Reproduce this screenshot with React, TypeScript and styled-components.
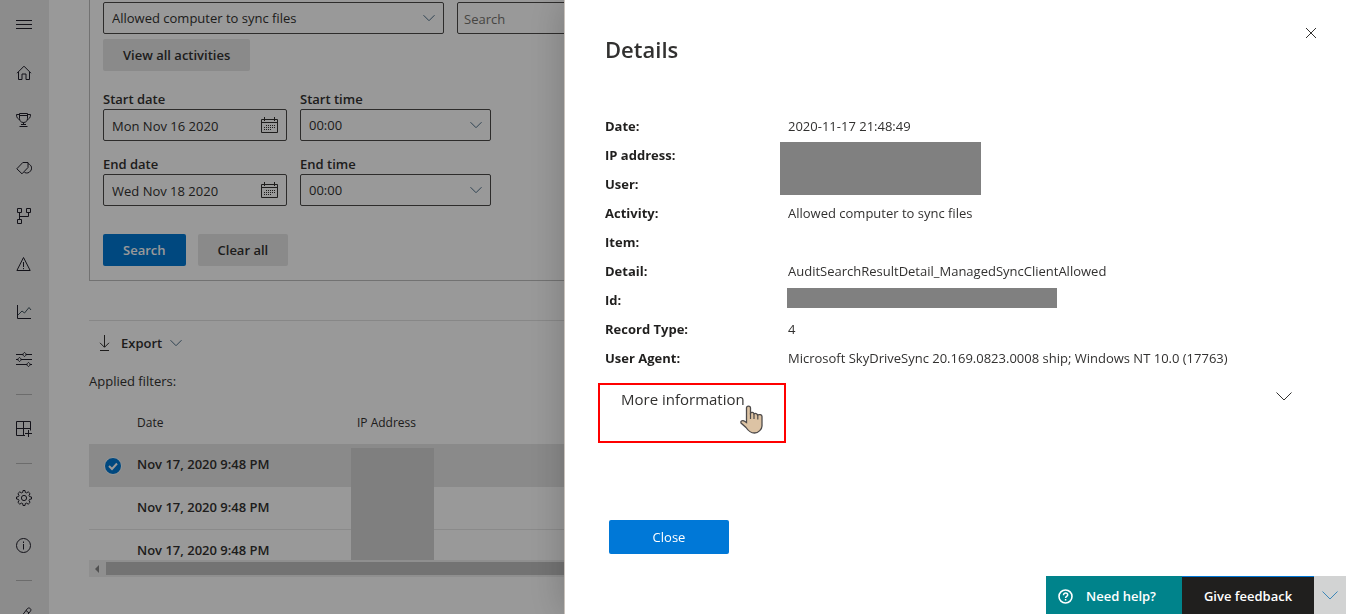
import React from 'react';
import styled, { createGlobalStyle } from 'styled-components';

const GlobalStyle = createGlobalStyle`
  * { box-sizing: border-box; }
  body {
    margin: 0;
    background: #fff;
    color: #323130;
    font-family: "Open Sans", "Noto Sans", sans-serif;
    font-size: 13px;
    line-height: 20px;
    overflow: hidden;
  }
  button, input, select { font: inherit; color: inherit; margin: 0; }
`;

const Icon = styled.svg`
  display: block;
  flex: none;
  fill: none;
  stroke: currentColor;
  stroke-width: 1;
`;

/* ---------- page ---------- */

const Shell = styled.div`
  display: flex;
  height: 100vh;
  overflow: hidden;
`;

const Sidebar = styled.nav`
  flex: none;
  width: 49px;
  background: #e9e9e9;
  color: #201f2a;
`;

const NavButton = styled.button`
  display: flex;
  align-items: center;
  width: 100%;
  height: 48px;
  padding: 0 0 0 16px;
  border: 0;
  background: none;
`;

const NavDivider = styled.hr`
  width: 16px;
  height: 1px;
  margin: 10px 0 10px 16px;
  border: 0;
  background: #b4b4b4;
`;

const Main = styled.main`
  flex: 1;
  min-width: 0;
  padding-left: 40px;
`;

const SearchForm = styled.form`
  display: flex;
  flex-direction: column;
  align-items: flex-start;
  padding: 2px 13px 14px;
  border: 1px solid #bebebe;
  border-top: 0;
`;

const FieldRow = styled.div<{ $top?: number }>`
  display: flex;
  gap: 13px;
  margin-top: ${(p) => p.$top ?? 0}px;
`;

const ButtonRow = styled(FieldRow)`
  gap: 12px;
`;

const Field = styled.div<{ $width: number }>`
  display: flex;
  flex-direction: column;
  width: ${(p) => p.$width}px;
`;

const FieldLabel = styled.label`
  height: 19px;
  line-height: 18px;
  font-weight: 600;
`;

const Control = styled.div`
  display: flex;
  align-items: center;
  height: 32px;
  padding-right: 8px;
  border: 1px solid #4c4a48;
  border-radius: 2px;
  background: #fff;
`;

const TextInput = styled.input<{ $inset?: number }>`
  flex: 1;
  min-width: 0;
  height: 30px;
  padding: 2px 0 0 ${(p) => p.$inset ?? 8}px;
  border: 0;
  outline: 0;
  background: none;
  &::placeholder { color: #76746f; opacity: 1; }
`;

const Select = styled.select`
  flex: 1;
  min-width: 0;
  height: 30px;
  padding: 0 0 0 8px;
  border: 0;
  outline: 0;
  appearance: none;
  background: none;
`;

const IconButton = styled.button`
  display: flex;
  padding: 0;
  border: 0;
  background: none;
`;

const Button = styled.button<{ $primary?: boolean }>`
  height: 32px;
  padding: 0 20px;
  border: 0;
  border-radius: 2px;
  font-weight: 600;
  background: ${(p) => (p.$primary ? '#0078d4' : '#e6e6e6')};
  color: ${(p) => (p.$primary ? '#fff' : '#323130')};
`;

const Results = styled.section`
  margin-top: 39px;
  border-top: 1px solid #e2e2e2;
`;

const ExportButton = styled.button`
  display: flex;
  align-items: center;
  gap: 8px;
  height: 44px;
  padding: 0 8px;
  border: 0;
  background: none;
  font-weight: 600;
`;

const Filters = styled.p`
  margin: 6px 0 0;
`;

const TableFrame = styled.div`
  position: relative;
  height: 158px;
  margin-top: 11px;
  overflow: hidden;
`;

const Table = styled.table`
  width: 100%;
  border-collapse: collapse;
  table-layout: fixed;
`;

const HeadCell = styled.th<{ $width?: number }>`
  width: ${(p) => (p.$width ? `${p.$width}px` : 'auto')};
  height: 42px;
  padding: 0;
  text-align: left;
  font-size: 12px;
  font-weight: 500;
`;

const Row = styled.tr<{ $selected?: boolean }>`
  height: 43px;
  background: ${(p) => (p.$selected ? '#e6e6e6' : '#fff')};
  box-shadow: inset 0 -1px #e6e6e6;
`;

const Cell = styled.td`
  padding: 0 0 4px;
  font-weight: 600;
`;

const CheckWrap = styled.label`
  position: relative;
  display: block;
  width: 18px;
  height: 18px;
  margin: 5px 0 0 15px;
`;

const CheckBox = styled.input`
  appearance: none;
  display: block;
  width: 18px;
  height: 18px;
  border: 1px solid #fff;
  border-radius: 50%;
  background: #0078d4;
`;

const CheckMark = styled(Icon)`
  position: absolute;
  inset: 0;
  color: #fff;
  stroke-width: 2;
`;

const AddressCover = styled.div`
  position: absolute;
  top: 46px;
  bottom: 0;
  left: 262px;
  width: 83px;
  background: #d4d4d4;
`;

const ScrollTrack = styled.div`
  display: flex;
  align-items: center;
  height: 17px;
  background: #efefef;
`;

const ScrollArrow = styled(Icon)`
  margin: 0 5px;
  fill: #888;
  stroke: none;
`;

const ScrollThumb = styled.div`
  flex: 1;
  height: 13px;
  background: #c0c0c0;
`;

const Overlay = styled.div`
  position: fixed;
  inset: 0;
  background: rgba(0, 0, 0, 0.4);
`;

/* ---------- details panel ---------- */

const Panel = styled.aside`
  position: fixed;
  inset: 0 0 0 564px;
  padding: 27px 24px 0 40px;
  border-left: 1px solid #c8c2bc;
  background: #fff;
  box-shadow: 0 0 36px rgba(0, 0, 0, 0.22);
`;

const PanelHead = styled.header`
  display: flex;
  align-items: flex-start;
  justify-content: space-between;
`;

const Title = styled.h2`
  margin: 6px 0 0;
  font-size: 22px;
  line-height: 32px;
  font-weight: 600;
`;

const CloseIconButton = styled(IconButton)`
  margin-right: 7px;
`;

const Facts = styled.dl`
  margin: 47px 0 0;
`;

const Fact = styled.div`
  display: grid;
  grid-template-columns: 183px 1fr;
  height: 29px;
  line-height: 28px;
`;

const FactName = styled.dt`
  font-weight: 700;
  color: #201f1e;
`;

const FactValue = styled.dd`
  position: relative;
  margin: 0;
`;

const Redaction = styled.span<{ $x: number; $y: number; $w: number; $h: number }>`
  position: absolute;
  left: ${(p) => p.$x}px;
  top: ${(p) => p.$y}px;
  width: ${(p) => p.$w}px;
  height: ${(p) => p.$h}px;
  background: #808080;
`;

const MoreBlock = styled.div`
  position: relative;
  margin-top: 10px;
  height: 60px;
`;

const MoreButton = styled.button`
  display: flex;
  align-items: flex-start;
  justify-content: space-between;
  width: 100%;
  padding: 6px 32px 0 16px;
  border: 0;
  background: none;
  font-size: 15px;
  line-height: 20px;
`;

const Highlight = styled.div`
  position: absolute;
  top: 0;
  left: -7px;
  width: 188px;
  height: 60px;
  border: 2px solid #f00;
  pointer-events: none;
`;

const Pointer = styled.svg`
  position: absolute;
  top: 22px;
  left: 134px;
`;

const CloseButton = styled.button`
  display: block;
  width: 120px;
  height: 34px;
  margin: 77px 0 0 4px;
  border: 0;
  border-radius: 2px;
  background: #0078d7;
  color: #fff;
`;

/* ---------- help dock ---------- */

const Dock = styled.div`
  position: fixed;
  right: 2px;
  bottom: 0;
  display: flex;
  height: 38px;
`;

const DockButton = styled.button<{ $kind: 'help' | 'feedback' | 'toggle' }>`
  display: flex;
  align-items: center;
  justify-content: ${(p) => (p.$kind === 'help' ? 'flex-start' : 'center')};
  gap: 13px;
  width: ${(p) => ({ help: 136, feedback: 132, toggle: 32 })[p.$kind]}px;
  padding: ${(p) => (p.$kind === 'help' ? '2px 0 0 12px' : '0')};
  border: 0;
  border-top: ${(p) => (p.$kind === 'feedback' ? '1px solid #0078d7' : '0')};
  background: ${(p) => ({ help: '#00838b', feedback: '#201f1e', toggle: '#d2d3d3' })[p.$kind]};
  color: ${(p) => (p.$kind === 'toggle' ? '#3c87b8' : '#fff')};
  font-weight: 600;
`;

const Down = () => (
  <Icon width="12" height="12" viewBox="0 0 12 12" color="#4f6f88" aria-hidden="true">
    <path d="M.5 3.2 6 8.7l5.5-5.5" />
  </Icon>
);

const Calendar = () => (
  <Icon width="17" height="17" viewBox="0 0 17 17" aria-hidden="true">
    <path d="M.5 2.500h16v13h-16zM.5 5.500h16M3.500 0v4M13.500 0v4" />
    <path d="M5 8.500h9M3 10.500h11M3 12.500h8" strokeDasharray="1 1" />
  </Icon>
);

const navIcons: Record<string, React.ReactNode> = {
  Menu: <path d="M0 4.5h16M0 8.5h16M0 12.5h16" />,
  Home: <path d="M1 9.2 8 2.2l7 7M2.5 8v7.5H6V10h4v5.5h3.5V8" />,
  Score: (
    <path d="M3.5 1.5h8v5c0 2.3-1.4 4-4 4s-4-1.7-4-4zM3.5 3.5h8M3.5 2.5h-3c0 3 1 4.5 3.4 5M11.5 2.5h3c0 3-1 4.5-3.4 5M7.5 10.5v2M5 12.5h5M3.5 14.5h8" />
  ),
  Classification: (
    <path d="M.8 8.8 6.8 2.500h5.200v5L6 13.800zM12 3.500c4 2 4.500 5 2.500 7.500-1.500 2-3.500 2.500-6 1.500" />
  ),
  Connectors: <path d="M1.5.5h4v4h-4zM10.5.5h4v4h-4zM1.5 11.5h4v4h-4zM3.5 4.5v7M3.5 8.5h9v-4" />,
  Alerts: <path d="M7.5 1.5.9 14.5h13.3zM7.5 6v5M7.5 12v1.2" />,
  Reports: (
    <>
      <path d="M1.5 1v13.5H15" />
      <path d="m2 11 4-4 2.5 2L13 3.5l2 2.5" stroke="#41545f" />
    </>
  ),
  Policies: (
    <path d="M0 2.5h7M10 2.5h6M0 7.5h2M5 7.500h11M0 12.5h11M14 12.5h2M8.5.5c2 1 2 3 0 4-2-1-2-3 0-4zM3.5 5.5c2 1 2 3 0 4-2-1-2-3 0-4zM12.5 10.5c2 1 2 3 0 4-2-1-2-3 0-4z" />
  ),
  Catalog: <path d="M9 14.5H.5V.5h14v9M.5 7.5h14M7.5.5v14M12.5 9v7M9 12.5h7" />,
  Settings: (
    <>
      <circle cx="8" cy="8" r="2.6" />
      <path d="m6.7 2.4.3-1.9h2l.3 1.9 1.3.5 1.6-1.1 1.9 1.9-1.1 1.6.5 1.3 2 .4v2l-2 .4-.5 1.3 1.1 1.6-1.9 1.9-1.6-1.1-1.3.5-.3 1.9H7l-.3-1.9-1.3-.5-1.6 1.1-1.9-1.9L3 10.700l-.5-1.3-2-.4V7l2-.4L3 5.300 1.900 3.700l1.900-1.900 1.600 1.100z" />
    </>
  ),
  Information: (
    <>
      <circle cx="7.5" cy="7.5" r="7" />
      <path d="M7.500 6v5.500M7.500 3.500V5" />
    </>
  ),
  Customize: <path d="m2 14 9.500-12.500c1.500-1.500 4.500.5 3 2.500L5 16M10 3.500l3 2.500" />,
};

const navGroups = [
  ['Menu', 'Home', 'Score', 'Classification', 'Connectors', 'Alerts', 'Reports', 'Policies'],
  ['Catalog'],
  ['Settings', 'Information'],
  ['Customize'],
];

const facts: { name: string; value?: React.ReactNode }[] = [
  { name: 'Date:', value: '2020-11-17 21:48:49' },
  { name: 'IP address:', value: <Redaction $x={-8} $y={1} $w={201} $h={53} /> },
  { name: 'User:' },
  { name: 'Activity:', value: 'Allowed computer to sync files' },
  { name: 'Item:' },
  { name: 'Detail:', value: 'AuditSearchResultDetail_ManagedSyncClientAllowed' },
  { name: 'Id:', value: <Redaction $x={-1} $y={2} $w={270} $h={20} /> },
  { name: 'Record Type:', value: '4' },
  { name: 'User Agent:', value: 'Microsoft SkyDriveSync 20.169.0823.0008 ship; Windows NT 10.0 (17763)' },
];

const periods = [
  { edge: 'Start', date: 'Mon Nov 16 2020', top: 19 },
  { edge: 'End', date: 'Wed Nov 18 2020', top: 14 },
];

export default function App() {
  return (
    <>
      <GlobalStyle />
      <Shell>
        <Sidebar aria-label="Main">
          {navGroups.map((group, i) => (
            <React.Fragment key={group[0]}>
              {i > 0 && <NavDivider />}
              {group.map((name) => (
                <NavButton key={name} type="button" aria-label={name}>
                  <Icon width="16" height="16" viewBox="0 0 16 16" aria-hidden="true">
                    {navIcons[name]}
                  </Icon>
                </NavButton>
              ))}
            </React.Fragment>
          ))}
        </Sidebar>
        <Main>
          <SearchForm onSubmit={(e) => e.preventDefault()}>
            <FieldRow>
              <Field $width={341}>
                <Control>
                  <Select aria-label="Activities">
                    <option>Allowed computer to sync files</option>
                  </Select>
                  <Down />
                </Control>
              </Field>
              <Field $width={341}>
                <Control>
                  <TextInput $inset={6} aria-label="Users" placeholder="Search" />
                </Control>
              </Field>
            </FieldRow>
            <ButtonRow $top={5}>
              <Button type="button">View all activities</Button>
            </ButtonRow>
            {periods.map(({ edge, date, top }) => (
              <FieldRow key={edge} $top={top}>
                <Field $width={184}>
                  <FieldLabel htmlFor={`${edge}-date`}>{edge} date</FieldLabel>
                  <Control>
                    <TextInput id={`${edge}-date`} defaultValue={date} />
                    <IconButton type="button" aria-label={`Pick ${edge} date`}>
                      <Calendar />
                    </IconButton>
                  </Control>
                </Field>
                <Field $width={191}>
                  <FieldLabel htmlFor={`${edge}-time`}>{edge} time</FieldLabel>
                  <Control>
                    <Select id={`${edge}-time`}>
                      <option>00:00</option>
                    </Select>
                    <Down />
                  </Control>
                </Field>
              </FieldRow>
            ))}
            <ButtonRow $top={28}>
              <Button type="submit" $primary>Search</Button>
              <Button type="reset">Clear all</Button>
            </ButtonRow>
          </SearchForm>
          <Results>
            <ExportButton type="button">
              <Icon width="16" height="18" viewBox="0 0 16 18" aria-hidden="true">
                <path d="M7.500 1v12M3 8.800l4.500 4.500L12 8.800M3 16.500h9" />
              </Icon>
              Export
              <Down />
            </ExportButton>
            <Filters>Applied filters:</Filters>
            <TableFrame>
              <Table>
                <thead>
                  <tr>
                    <HeadCell $width={48} aria-label="Selected" />
                    <HeadCell $width={220}>Date</HeadCell>
                    <HeadCell>IP Address</HeadCell>
                  </tr>
                </thead>
                <tbody>
                  {[true, false, false].map((selected, i) => (
                    <Row key={i} $selected={selected}>
                      <Cell>
                        {selected && (
                          <CheckWrap>
                            <CheckBox type="checkbox" defaultChecked aria-label="Select row" />
                            <CheckMark width="18" height="18" viewBox="0 0 18 18" aria-hidden="true">
                              <path d="m5 9 3 3 5-5.500" />
                            </CheckMark>
                          </CheckWrap>
                        )}
                      </Cell>
                      <Cell>Nov 17, 2020 9:48 PM</Cell>
                      <Cell />
                    </Row>
                  ))}
                </tbody>
              </Table>
              <AddressCover />
            </TableFrame>
            <ScrollTrack>
              <ScrollArrow width="7" height="8" viewBox="0 0 7 8" aria-hidden="true">
                <path d="M1 4 5 0v8z" />
              </ScrollArrow>
              <ScrollThumb />
            </ScrollTrack>
          </Results>
        </Main>
      </Shell>
      <Overlay />
      <Panel aria-label="Details">
        <PanelHead>
          <Title>Details</Title>
          <CloseIconButton type="button" aria-label="Close panel">
            <Icon width="12" height="12" viewBox="0 0 12 12" aria-hidden="true">
              <path d="m1 1 10 10M11 1 1 11" />
            </Icon>
          </CloseIconButton>
        </PanelHead>
        <Facts>
          {facts.map(({ name, value }) => (
            <Fact key={name}>
              <FactName>{name}</FactName>
              <FactValue>{value}</FactValue>
            </Fact>
          ))}
        </Facts>
        <MoreBlock>
          <MoreButton type="button" aria-expanded="false">
            More information
            <Icon width="16" height="16" viewBox="0 0 16 16" aria-hidden="true">
              <path d="m.5 3.500 7.500 7.500 7.500-7.500" />
            </Icon>
          </MoreButton>
          <Highlight />
          <Pointer width="26" height="30" viewBox="0 0 26 30" aria-hidden="true">
            <path
              d="M7.500 17.500V3c0-2.600 4-2.600 4 0v5c1-1 3-.7 3.500.8 1.200-.8 3.200-.3 3.500 1.200 1.500-.8 4.500-.4 4.500 1.500V21c0 3-3.500 7-7.500 7-4.500 0-6.500-2.500-8.500-5.500L2 18c-.8-1.600 1-3 2.800-2.200z"
              fill="#dcc3a4"
              stroke="#4d4a4a"
              strokeWidth="1.300"
            />
            <path d="M11.500 8v6M15 9v5M18.800 10v4.500" stroke="#4d4a4a" strokeWidth="1.200" fill="none" />
          </Pointer>
        </MoreBlock>
        <CloseButton type="button">Close</CloseButton>
      </Panel>
      <Dock>
        <DockButton $kind="help" type="button">
          <Icon width="15" height="15" viewBox="0 0 15 15" aria-hidden="true">
            <circle cx="7.500" cy="7.500" r="6.500" strokeWidth="1.600" />
            <path d="M5.500 6.200c0-2.900 4.200-2.700 4.200-.2C9.700 7.400 7.600 7.500 7.600 9M7.600 10v1.600" strokeWidth="1.500" />
          </Icon>
          Need help?
        </DockButton>
        <DockButton $kind="feedback" type="button">Give feedback</DockButton>
        <DockButton $kind="toggle" type="button" aria-label="Collapse">
          <Icon width="16" height="16" viewBox="0 0 16 16" aria-hidden="true">
            <path d="m.5 4.500 7.500 7.500 7.500-7.500" />
          </Icon>
        </DockButton>
      </Dock>
    </>
  );
}
